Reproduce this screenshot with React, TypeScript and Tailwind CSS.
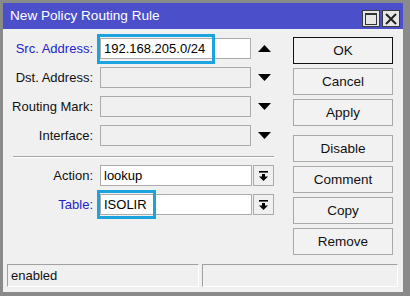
import React from "react";

function TriUp() {
  return (
    <svg width="13" height="7" viewBox="0 0 13 7">
      <polygon points="0,7 13,7 6.5,0" fill="#000" />
    </svg>
  );
}
function TriDown() {
  return (
    <svg width="13" height="7" viewBox="0 0 13 7">
      <polygon points="0,0 13,0 6.5,7" fill="#000" />
    </svg>
  );
}
function DropIcon() {
  return (
    <svg width="9" height="10" viewBox="0 0 9 10">
      <rect x="0" y="0" width="9" height="1.6" fill="#000" />
      <rect x="3" y="3" width="3" height="3" fill="#000" />
      <polygon points="0,5.5 9,5.5 4.5,10" fill="#000" />
    </svg>
  );
}

function Row({
  label,
  blue,
  value,
  enabled,
  arrow,
}: {
  label: string;
  blue?: boolean;
  value?: string;
  enabled?: boolean;
  arrow: "up" | "down";
}) {
  return (
    <div className="flex items-center h-[21px]">
      <div className={`w-[90px] text-right ${blue ? "text-[#2323c8]" : "text-[#111]"}`}>{label}</div>
      <div
        className={`ml-[7px] w-[151px] h-[21px] border border-[#ababab] pl-[3px] flex items-center ${
          enabled ? "bg-white" : "bg-[#f0f0f0]"
        }`}
      >
        {value}
      </div>
      <div className="w-[27px] flex justify-center">{arrow === "up" ? <TriUp /> : <TriDown />}</div>
    </div>
  );
}

function DropRow({ label, blue, value }: { label: string; blue?: boolean; value: string }) {
  return (
    <div className="flex items-center h-[21px]">
      <div className={`w-[90px] text-right ${blue ? "text-[#2323c8]" : "text-[#111]"}`}>{label}</div>
      <div className="ml-[7px] w-[152px] h-[21px] border border-[#ababab] bg-white pl-[3px] flex items-center">
        {value}
      </div>
      <div className="ml-[1px] w-[21px] h-[21px] border border-[#ababab] bg-[#f0f0f0] flex items-center justify-center">
        <DropIcon />
      </div>
    </div>
  );
}

function Btn({ children, def, className = "" }: { children: React.ReactNode; def?: boolean; className?: string }) {
  return (
    <div
      className={`w-[100px] h-[27px] flex items-center justify-center bg-[#f2f2f2] border text-[13.5px] ${
        def ? "border-[#111]" : "border-[#a8a8a8]"
      } text-[#111] ${className}`}
    >
      {children}
    </div>
  );
}

export default function App() {
  return (
    <div className="relative w-[410px] h-[296px] bg-[#8a8a8a] pl-[3px] pt-[3px] pr-[7px] pb-[4px] font-['Liberation_Sans',Arial,sans-serif] text-[13px] leading-none overflow-hidden">
      <div className="flex flex-col h-full">
        <div className="h-[26px] bg-[#4b4fc9] flex items-center pl-[7px] pr-[3px] shrink-0">
          <span className="text-white text-[13.6px]">New Policy Routing Rule</span>
          <div className="ml-auto flex gap-[2px] self-start mt-[7px]">
            <div className="w-[18px] h-[17px] bg-[#e6e6e6] border border-[#3a3a3a] flex items-center justify-center">
              <div className="w-[12px] h-[12px] border-[1.5px] border-t-[2px] border-[#333]" />
            </div>
            <div className="w-[18px] h-[17px] bg-[#e6e6e6] border border-[#3a3a3a] flex items-center justify-center">
              <svg width="12" height="12" viewBox="0 0 12 12">
                <path d="M1 1 L11 11 M11 1 L1 11" stroke="#222" strokeWidth="2" />
              </svg>
            </div>
          </div>
        </div>
        <div className="flex-1 bg-[#f0f0f0] flex flex-col">
          <div className="flex">
            <div className="w-[277px] pt-[9px] flex flex-col">
              <div className="flex flex-col gap-[8px]">
                <Row label="Src. Address:" blue value="192.168.205.0/24" enabled arrow="up" />
                <Row label="Dst. Address:" arrow="down" />
                <Row label="Routing Mark:" arrow="down" />
                <Row label="Interface:" arrow="down" />
              </div>
              <div className="mt-[10px] ml-[10px] w-[261px] border-t border-[#a5a5a5] border-b border-b-white" />
              <div className="mt-[7px] flex flex-col gap-[8px]">
                <DropRow label="Action:" value="lookup" />
                <DropRow label="Table:" blue value="ISOLIR" />
              </div>
            </div>
            <div className="ml-[13px] pt-[8px] flex flex-col">
              <Btn def>OK</Btn>
              <Btn className="mt-[4px]">Cancel</Btn>
              <Btn className="mt-[4px]">Apply</Btn>
              <Btn className="mt-[9px]">Disable</Btn>
              <Btn className="mt-[4px]">Comment</Btn>
              <Btn className="mt-[4px]">Copy</Btn>
              <Btn className="mt-[4px]">Remove</Btn>
            </div>
          </div>
          <div className="mt-auto mb-[5px] ml-[4px] flex gap-[3px] h-[23px]">
            <div className="w-[192px] h-full border-t border-l border-[#a0a0a0] border-r border-b border-r-white border-b-white flex items-center pl-[3px] text-[#111]">
              enabled
            </div>
            <div className="w-[196px] h-full border-t border-l border-[#a0a0a0] border-r border-b border-r-white border-b-white" />
          </div>
        </div>
      </div>
      <div className="absolute left-[97px] top-[34px] w-[118px] h-[30px] border-[3px] border-[#1aa3dd]" />
      <div className="absolute left-[97px] top-[190px] w-[59px] h-[29px] border-[3px] border-[#1aa3dd]" />
    </div>
  );
}
